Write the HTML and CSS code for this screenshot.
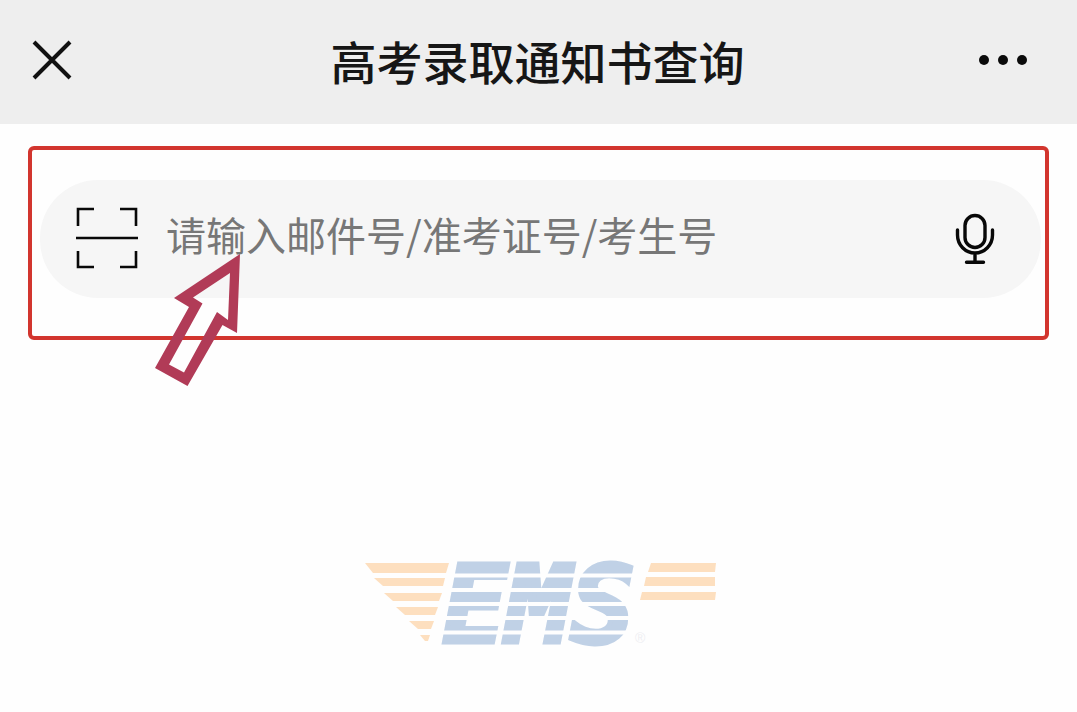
FILE: index.html
```html
<!DOCTYPE html>
<html lang="zh-CN">
<head>
<meta charset="utf-8">
<meta name="viewport" content="width=device-width, initial-scale=1">
<title>高考录取通知书查询</title>
<link rel="stylesheet" href="styles.css">
</head>
<body>
<header class="topbar">
  <button class="icon-button" type="button" aria-label="关闭">
    <svg width="40" height="40" viewBox="0 0 40 40" fill="none" stroke="#111" stroke-width="4"><path d="M2 2 38 38M38 2 2 38"/></svg>
  </button>
  <h1 class="title">高考录取通知书查询</h1>
  <button class="icon-button icon-button-end" type="button" aria-label="更多">
    <svg width="50" height="12" viewBox="0 0 50 12" fill="#0a0a0a"><circle cx="5" cy="6" r="5"/><circle cx="24" cy="6" r="5"/><circle cx="43" cy="6" r="5"/></svg>
  </button>
</header>
<main class="content">
  <section class="highlight">
    <form class="search">
      <button class="icon-button" type="button" aria-label="扫码">
        <svg width="62" height="62" viewBox="0 0 62 62" fill="none" stroke="#080808" stroke-width="2.6"><path d="M2 19V2H18M44 2H60V19M60 44V60H44M18 60H2V44M0 31H62"/></svg>
      </button>
      <input class="search-input" type="text" aria-label="邮件号/准考证号/考生号" placeholder="请输入邮件号/准考证号/考生号">
      <button class="icon-button" type="button" aria-label="语音输入">
        <svg width="40" height="52" viewBox="0 0 40 52" fill="none" stroke="#080808" stroke-width="3.4" stroke-linecap="round"><rect x="10" y="3.5" width="20" height="32" rx="10"/><path d="M2.5 18V23A17.5 18 0 0 0 37.5 23V18M20 41V50M11.500 50.300H28.500"/></svg>
      </button>
    </form>
    <svg class="pointer" width="92" height="140" viewBox="0 0 92 140" aria-hidden="true"><path fill="#b13b57" fill-rule="evenodd" d="M90 4 87 83 72.500 75 37.500 136 5 118 39 57 24 48ZM80 23 43 47.500 52.500 53.500 19 114.500 34 122.500 67 62 78 70Z"/></svg>
  </section>
  <svg class="logo" width="356" height="88" viewBox="-2 0 356 88" role="img" aria-label="EMS">
    <g fill="#fddfbf">
      <path d="M2 3H86L83 13H10ZM11 18H82L80 26H20ZM21 33H79L76 41H30ZM33 47H75L72 55H42ZM46 61H71L68 69H55ZM57 75H67L65 81H62Z"/>
      <path d="M288 3H353L352 12H285ZM283 17H352V26H281ZM279 32H353L352 40H277Z"/>
    </g>
    <text class="logo-text" x="80" y="82">EMS</text>
    <path stroke="#fefefe" stroke-width="4" d="M90 15.500H278M86 30H276M84 44H274M80 58H272M76 72.500H270"/>
    <text class="logo-mark" x="272" y="83">®</text>
  </svg>
</main>
</body>
</html>
```
FILE: styles.css
```css
* {
  box-sizing: border-box;
}

body {
  margin: 0;
  background: #fefefe;
  font-family: "Noto Sans CJK SC", sans-serif;
}

.topbar {
  display: grid;
  grid-template-columns: 1fr auto 1fr;
  align-items: center;
  padding: 26px 48px 30px 32px;
  background: #eee;
}

.title {
  margin: 0 0 0 14px;
  color: #161616;
  font-size: 46px;
  font-weight: 500;
  line-height: 68px;
}

.icon-button {
  display: flex;
  flex: none;
  justify-self: start;
  padding: 0;
  border: 0;
  background: none;
}

.icon-button-end {
  justify-self: end;
}

.content {
  display: flex;
  flex-direction: column;
  padding: 22px 28px;
}

.highlight {
  position: relative;
  padding: 30px 4px 38px 8px;
  border: 4px solid #d2352e;
  border-radius: 6px;
}

.search {
  display: flex;
  align-items: center;
  gap: 28px;
  padding: 26px 46px 28px 36px;
  border-radius: 58px;
  background: #f6f6f6;
}

.search-input {
  flex: 1;
  min-width: 0;
  padding: 0 0 8px;
  border: 0;
  outline: 0;
  background: none;
  color: #222;
  font-family: inherit;
  font-size: 40px;
  line-height: 56px;
}

.search-input::placeholder {
  color: #777;
  opacity: 1;
}

.pointer {
  position: absolute;
  top: 100px;
  left: 118px;
}

.logo {
  align-self: center;
  margin-top: 220px;
  overflow: visible;
}

.logo-text {
  fill: #c0d1e6;
  stroke: #c0d1e6;
  stroke-width: 5px;
  font-family: "DejaVu Sans Mono", monospace;
  font-size: 106px;
  font-style: italic;
  font-weight: 700;
}

.logo-mark {
  fill: #eeeef2;
  font-family: "Liberation Sans", sans-serif;
  font-size: 14px;
}
```
